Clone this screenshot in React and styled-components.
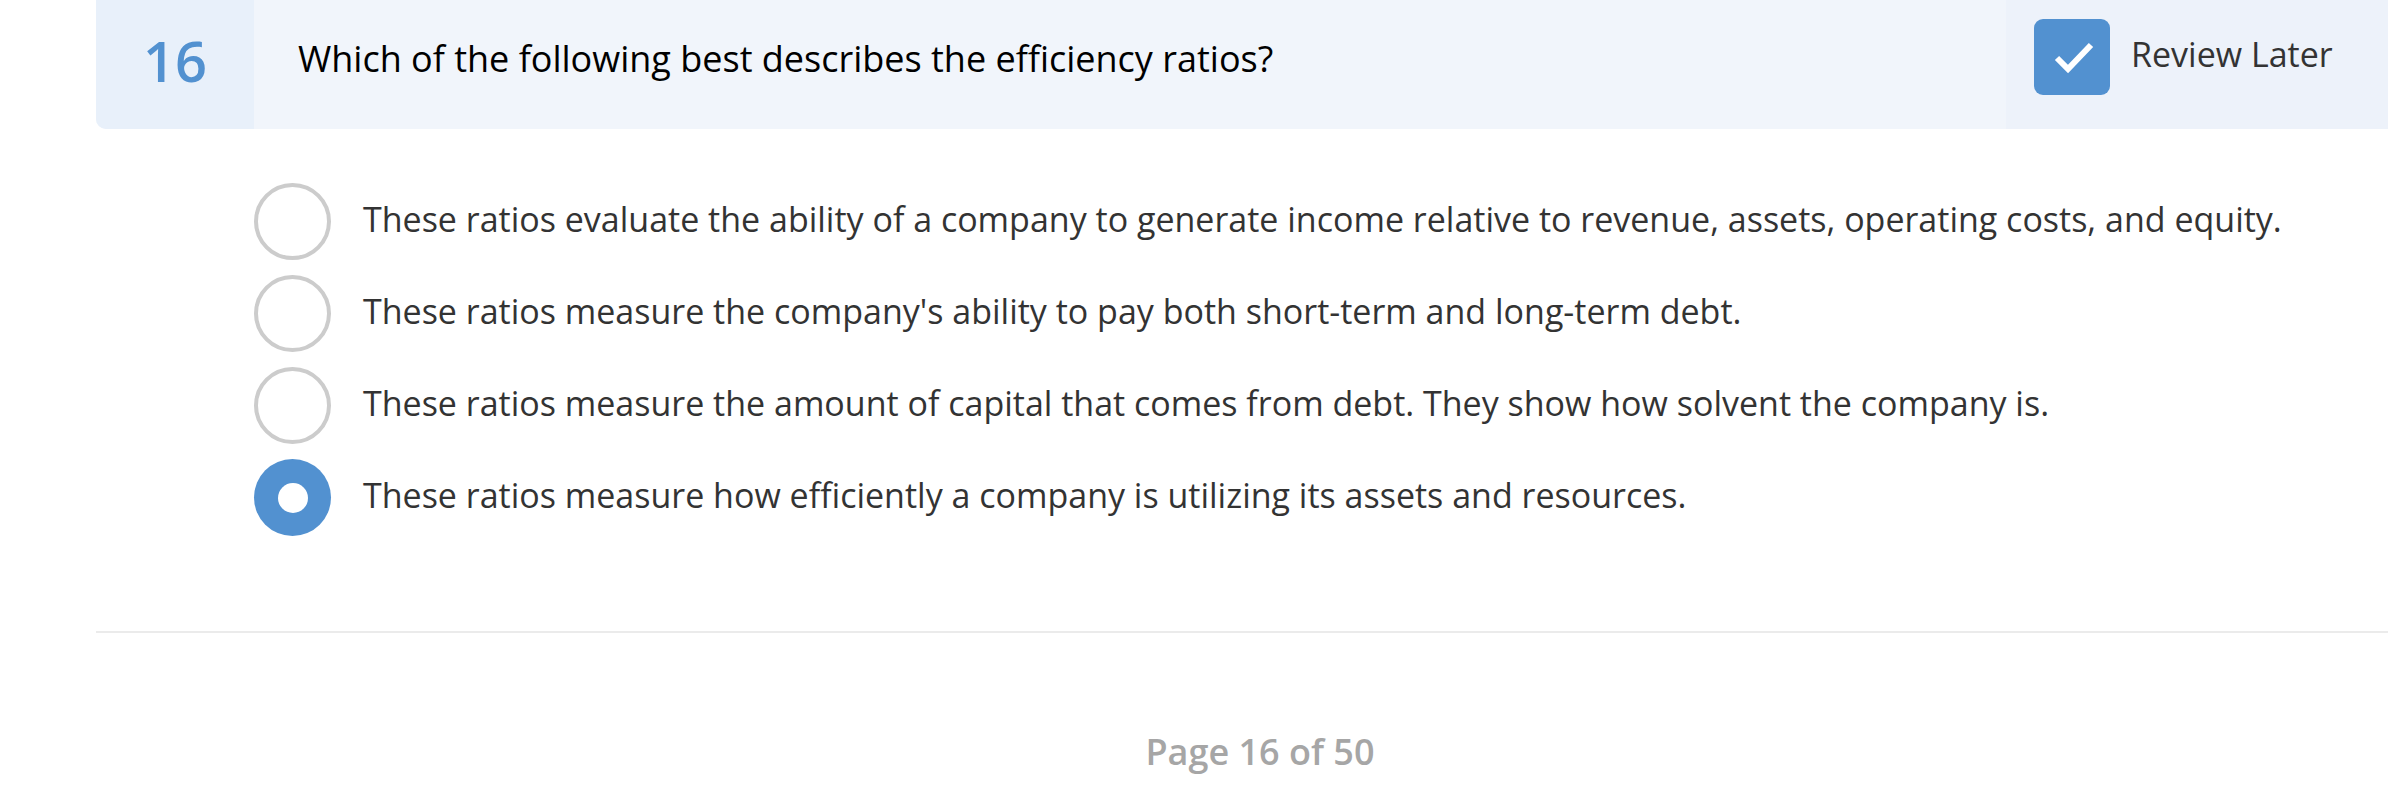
import React from "react";
import styled, { createGlobalStyle } from "styled-components";

const GlobalStyle = createGlobalStyle`
  html, body {
    margin: 0;
    padding: 0;
    background: #ffffff;
  }
  body {
    font-family: "Open Sans", "Liberation Sans", sans-serif;
    overflow: hidden;
  }
`;

const OPTIONS = [
  "These ratios evaluate the ability of a company to generate income relative to revenue, assets, operating costs, and equity.",
  "These ratios measure the company's ability to pay both short-term and long-term debt.",
  "These ratios measure the amount of capital that comes from debt. They show how solvent the company is.",
  "These ratios measure how efficiently a company is utilizing its assets and resources.",
];

const App = () => {
  const selected = 3;

  return (
    <>
      <GlobalStyle />
      <Page>
        <QuestionHeader>
          <NumberCell>16</NumberCell>
          <QuestionText>
            Which of the following best describes the efficiency ratios?
          </QuestionText>
          <ReviewCell>
            <Checkbox>
              <svg width="76" height="76" viewBox="0 0 76 76">
                <path
                  d="M23 39 L34 50 L57 26"
                  fill="none"
                  stroke="#ffffff"
                  strokeWidth="6"
                />
              </svg>
            </Checkbox>
            <ReviewLabel>Review Later</ReviewLabel>
          </ReviewCell>
        </QuestionHeader>

        <OptionList>
          {OPTIONS.map((text, i) => (
            <Option key={i}>
              <Radio $checked={i === selected} />
              <OptionText>{text}</OptionText>
            </Option>
          ))}
        </OptionList>

        <Divider />

        <Footer>Page 16 of 50</Footer>
      </Page>
    </>
  );
};

const Page = styled.div`
  padding-left: 96px;
`;

const QuestionHeader = styled.header`
  display: flex;
  align-items: stretch;
  height: 129px;
  background: #f1f5fb;
  border-bottom-left-radius: 10px;
  overflow: hidden;
`;

const NumberCell = styled.div`
  display: flex;
  align-items: center;
  justify-content: center;
  width: 158px;
  flex-shrink: 0;
  padding-bottom: 10px;
  box-sizing: border-box;
  background: #e8f0fa;
  color: #5291d0;
  font-size: 56px;
  font-weight: 600;
`;

const QuestionText = styled.div`
  flex: 1;
  display: flex;
  align-items: center;
  padding-left: 44px;
  padding-bottom: 12px;
  color: #000000;
  font-size: 36px;
`;

const ReviewCell = styled.div`
  display: flex;
  align-items: flex-start;
  gap: 21px;
  width: 382px;
  flex-shrink: 0;
  box-sizing: border-box;
  padding: 19px 0 0 28px;
  background: #edf2fa;
`;

const Checkbox = styled.div`
  width: 76px;
  height: 76px;
  flex-shrink: 0;
  border-radius: 9px;
  background: #5291d0;

  svg {
    display: block;
  }
`;

const ReviewLabel = styled.span`
  margin-top: 12px;
  color: #333333;
  font-size: 34px;
  white-space: nowrap;
`;

const OptionList = styled.div`
  display: flex;
  flex-direction: column;
  gap: 15px;
  padding: 54px 0 0 158px;
`;

const Option = styled.label`
  display: flex;
  align-items: center;
  gap: 32px;
  height: 77px;
`;

const Radio = styled.span`
  display: flex;
  align-items: center;
  justify-content: center;
  width: 77px;
  height: 77px;
  flex-shrink: 0;
  box-sizing: border-box;
  border-radius: 50%;
  border: ${(p) => (p.$checked ? "none" : "4px solid #cccccc")};
  background: ${(p) => (p.$checked ? "#5291d0" : "#ffffff")};

  &::after {
    content: "";
    display: ${(p) => (p.$checked ? "block" : "none")};
    width: 30px;
    height: 30px;
    border-radius: 50%;
    background: #ffffff;
  }
`;

const OptionText = styled.span`
  margin-bottom: 6px;
  color: #333333;
  font-size: 34px;
  white-space: nowrap;
`;

const Divider = styled.hr`
  margin: 95px 0 0;
  border: none;
  height: 2px;
  background: #ebebeb;
`;

const Footer = styled.div`
  padding: 94px 0 0 36px;
  text-align: center;
  color: #a6a6a6;
  font-size: 36px;
  font-weight: 600;
`;

export default App;
